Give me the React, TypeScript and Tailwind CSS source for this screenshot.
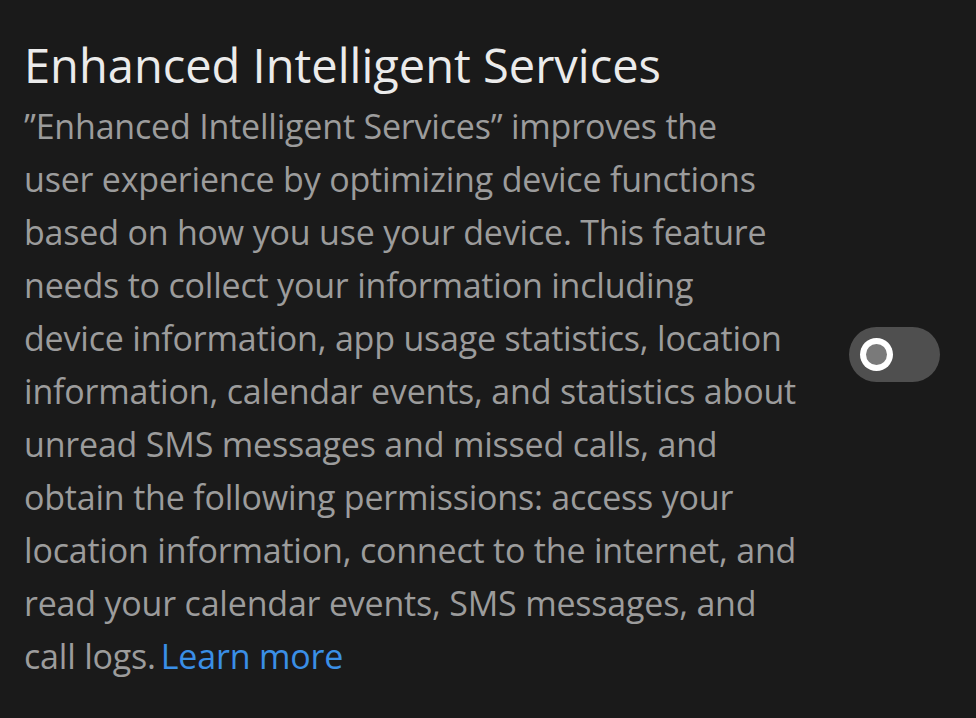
const lines = [
  "\u201DEnhanced Intelligent Services\u201D improves the",
  "user experience by optimizing device functions",
  "based on how you use your device. This feature",
  "needs to collect your information including",
  "device information, app usage statistics, location",
  "information, calendar events, and statistics about",
  "unread SMS messages and missed calls, and",
  "obtain the following permissions: access your",
  "location information, connect to the internet, and",
  "read your calendar events, SMS messages, and",
];

export default function App() {
  return (
    <div className="min-h-[718px] w-full bg-[#1a1a1a] font-['Open_Sans',sans-serif]">
      <div className="flex items-center pl-[24px] pr-[36px] pt-[36px]">
        <div className="flex-1">
          <h1 className="text-[47px] leading-[58px] text-[#ebebeb]">
            Enhanced Intelligent Services
          </h1>
          <p className="mt-[6px] text-[34px] leading-[53px] tracking-[-0.2px] text-[#9c9c9c]">
            {lines.map((l) => (
              <span key={l} className="block whitespace-nowrap">
                {l}
              </span>
            ))}
            <span className="block whitespace-nowrap">
              call logs.
              <span className="ml-[5px] text-[#3a8fe6]">Learn more</span>
            </span>
          </p>
        </div>
        <button
          type="button"
          aria-label="Enhanced Intelligent Services"
          className="mb-[10px] flex h-[55px] w-[91px] items-center rounded-full bg-[#4f4f4f] pl-[11px]"
        >
          <span className="flex h-[33px] w-[33px] items-center justify-center rounded-full bg-white">
            <span className="h-[21px] w-[21px] rounded-full bg-[#7a7a7a]" />
          </span>
        </button>
      </div>
    </div>
  );
}
